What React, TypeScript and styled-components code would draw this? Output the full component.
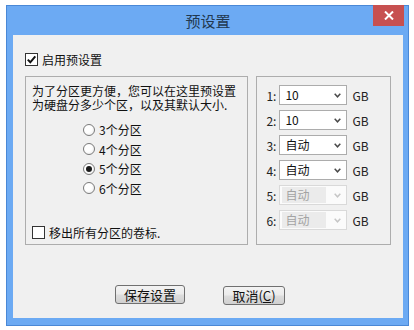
import React from 'react';
import styled, { createGlobalStyle } from 'styled-components';

const GlobalStyle = createGlobalStyle`
  html, body {
    margin: 0;
    padding: 0;
    background: #ffffff;
  }
  body {
    font-family: "Noto Sans CJK SC", "Liberation Sans", sans-serif;
    font-size: 12px;
    color: #1a1a1a;
  }
`;

const Window = styled.div`
  position: relative;
  box-sizing: border-box;
  width: 403px;
  height: 321px;
  margin: 5px 0 0 6px;
  border: 1px solid #4a88d6;
  background: #6caaf3;
  padding: 0 5px 7px 6px;
  display: flex;
  flex-direction: column;
`;

const TitleBar = styled.div`
  height: 29px;
  display: flex;
  align-items: center;
  justify-content: center;
  font-size: 15px;
  color: #22384f;
`;

const CloseButton = styled.div`
  position: absolute;
  top: -1px;
  right: 4px;
  width: 31px;
  height: 21px;
  background: #c75050;
  display: flex;
  align-items: center;
  justify-content: center;
`;

const Content = styled.div`
  flex: 1;
  background: #f0f0f0;
  padding: 0 12px;
  display: flex;
  flex-direction: column;
`;

const CheckRow = styled.div<{ $top?: number }>`
  display: flex;
  align-items: center;
  gap: 4px;
  height: 13px;
  margin-top: ${({ $top }) => $top ?? 0}px;
  line-height: 13px;
  color: #111;
`;

const Box = styled.span`
  box-sizing: border-box;
  width: 13px;
  height: 13px;
  border: 1px solid #333;
  background: #fff;
  display: flex;
  align-items: center;
  justify-content: center;
  flex-shrink: 0;
`;

const Panels = styled.div`
  display: flex;
  gap: 8px;
  margin-top: 10px;
  height: 169px;
`;

const GroupBox = styled.div<{ $width: number }>`
  box-sizing: border-box;
  width: ${({ $width }) => $width}px;
  height: 100%;
  border: 1px solid #adadad;
  display: flex;
  flex-direction: column;
`;

const LeftGroup = styled(GroupBox)`
  padding: 7px 6px 5px 6px;
`;

const RightGroup = styled(GroupBox)`
  padding: 8px 0 0 9px;
  gap: 5px;
`;

const Description = styled.div`
  line-height: 14px;
  color: #111;
  white-space: nowrap;
`;

const RadioList = styled.div`
  margin: 8px 0 0 51px;
  display: flex;
  flex-direction: column;
`;

const RadioRow = styled.div`
  height: 19.5px;
  display: flex;
  align-items: center;
  gap: 4px;
  color: #111;
`;

const RadioCircle = styled.span<{ $on?: boolean }>`
  box-sizing: border-box;
  width: 12px;
  height: 12px;
  border-radius: 50%;
  border: 1px solid #7a7a7a;
  background: radial-gradient(circle at 40% 40%, #ffffff 40%, #e6e6e6 100%);
  display: flex;
  align-items: center;
  justify-content: center;

  &::after {
    content: '';
    display: ${({ $on }) => ($on ? 'block' : 'none')};
    width: 6px;
    height: 6px;
    border-radius: 50%;
    background: #1a1a1a;
  }
`;

const BottomCheck = styled(CheckRow)`
  margin-top: auto;
`;

const SizeRow = styled.div`
  display: flex;
  align-items: center;
  height: 20px;
`;

const RowLabel = styled.span`
  width: 13px;
  color: #222;
`;

const Select = styled.div<{ $disabled?: boolean }>`
  box-sizing: border-box;
  width: 68px;
  height: 20px;
  border: 1px solid ${({ $disabled }) => ($disabled ? '#d9d9d9' : '#acacac')};
  background: ${({ $disabled }) => ($disabled ? '#fbfbfb' : '#ffffff')};
  display: flex;
  align-items: center;
  padding: 0 5px 0 2px;
  margin-right: 5px;
`;

const SelectValue = styled.span<{ $disabled?: boolean }>`
  flex: 1;
  height: 16px;
  line-height: 16px;
  padding-left: 3px;
  margin-right: 8px;
  color: ${({ $disabled }) => ($disabled ? '#a3a3a3' : '#111')};
  background: ${({ $disabled }) => ($disabled ? '#ebebeb' : 'transparent')};
`;

const Unit = styled.span`
  color: #222;
`;

const ButtonRow = styled.div`
  display: flex;
  align-items: flex-start;
  margin: 40px 0 0 90px;
`;

const Button = styled.button<{ $width: number; $offset?: number }>`
  box-sizing: border-box;
  width: ${({ $width }) => $width}px;
  height: 19px;
  margin-top: ${({ $offset }) => $offset ?? 0}px;
  padding: 0;
  border: 1px solid #707070;
  border-radius: 3px;
  background: linear-gradient(#f3f3f3, #ebebeb 48%, #dddddd 52%, #d0d0d0);
  font-family: "Noto Sans CJK SC", "Liberation Sans", sans-serif;
  font-size: 13px;
  line-height: 16px;
  color: #111;

  & + & {
    margin-left: 38px;
  }
`;

const Chevron = ({ disabled }: { disabled?: boolean }) => (
  <svg width="7" height="5" viewBox="0 0 7 5">
    <polyline
      points="0.7,0.8 3.5,3.8 6.3,0.8"
      fill="none"
      stroke={disabled ? '#c6c6c6' : '#4a4a4a'}
      strokeWidth="1.5"
    />
  </svg>
);

const CheckMark = () => (
  <svg width="11" height="11" viewBox="0 0 11 11">
    <polyline points="1.8,5.6 4.3,8.3 9.3,2.3" fill="none" stroke="#111" strokeWidth="2" />
  </svg>
);

const partitions = ['3个分区', '4个分区', '5个分区', '6个分区'];

const sizes = [
  { value: '10', disabled: false },
  { value: '10', disabled: false },
  { value: '自动', disabled: false },
  { value: '自动', disabled: false },
  { value: '自动', disabled: true },
  { value: '自动', disabled: true },
];

export default function App() {
  return (
    <>
      <GlobalStyle />
      <Window>
        <TitleBar>预设置</TitleBar>
        <CloseButton>
          <svg width="10" height="9" viewBox="0 0 10 9">
            <path d="M1 0.5 L9 8.5 M9 0.5 L1 8.5" stroke="#fff" strokeWidth="2" />
          </svg>
        </CloseButton>
        <Content>
          <CheckRow $top={18}>
            <Box>
              <CheckMark />
            </Box>
            启用预设置
          </CheckRow>
          <Panels>
            <LeftGroup $width={224}>
              <Description>
                为了分区更方便，您可以在这里预设置
                <br />
                为硬盘分多少个区，以及其默认大小.
              </Description>
              <RadioList>
                {partitions.map((label, i) => (
                  <RadioRow key={label}>
                    <RadioCircle $on={i === 2} />
                    {label}
                  </RadioRow>
                ))}
              </RadioList>
              <BottomCheck>
                <Box />
                移出所有分区的卷标.
              </BottomCheck>
            </LeftGroup>
            <RightGroup $width={135}>
              {sizes.map((s, i) => (
                <SizeRow key={i}>
                  <RowLabel>{i + 1}:</RowLabel>
                  <Select $disabled={s.disabled}>
                    <SelectValue $disabled={s.disabled}>{s.value}</SelectValue>
                    <Chevron disabled={s.disabled} />
                  </Select>
                  <Unit>GB</Unit>
                </SizeRow>
              ))}
            </RightGroup>
          </Panels>
          <ButtonRow>
            <Button $width={70}>保存设置</Button>
            <Button $width={62} $offset={1}>
              取消(<u>C</u>)
            </Button>
          </ButtonRow>
        </Content>
      </Window>
    </>
  );
}
